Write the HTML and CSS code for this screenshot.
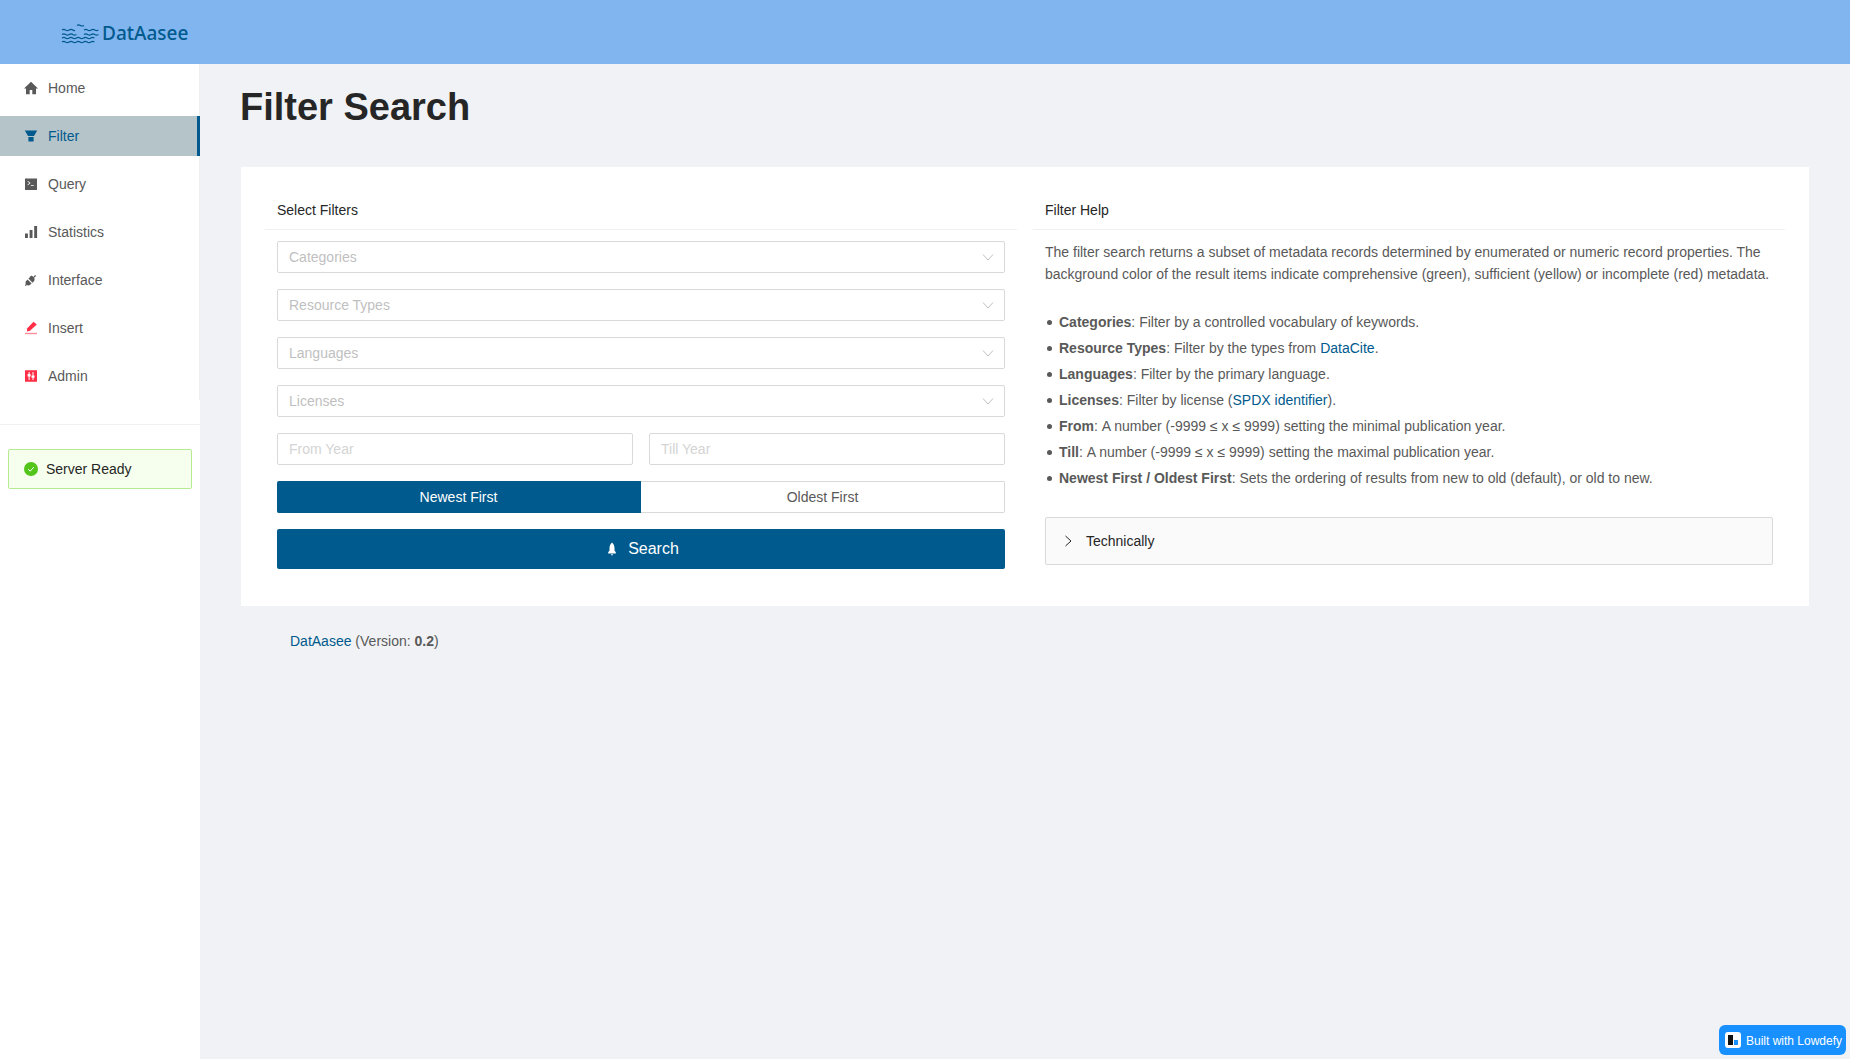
FILE: index.html
```html
<!DOCTYPE html>
<html lang="en">
<head>
    <meta charset="UTF-8">
    <meta name="viewport" content="width=device-width, initial-scale=1.0">
    <title>Filter Search - DatAasee</title>
    <link rel="stylesheet" href="styles.css">
</head>
<body>
    <header class="top-bar">
        <a href="#" class="logo">
            <svg class="logo-waves" width="38" height="20" viewBox="0 0 38 20" fill="none" stroke="#005a8d" stroke-width="1.200">
                <path d="M16 1.500c1.200-.8 2.200-.8 3.500 0s2.300 .6 3.500 0"/>
                <path d="M1 6c1.200-.9 2.400-.9 3.600 0s2.400 .9 3.600 0 2.400-.9 3.600 0 1.500 .7 2.200 .4M23 6c1.200-.9 2.400-.9 3.600 0s2.400 .9 3.600 0 2.400-.9 3.600 0 2.400 .9 3.600 0"/>
                <path d="M1 10.500c1.200-.9 2.400-.9 3.600 0s2.400 .9 3.600 0 2.400-.9 3.600 0 2.400 .9 3.600 0M23 10.500c1.200-.9 2.400-.9 3.600 0s2.400 .9 3.600 0 2.400-.9 3.600 0 2.400 .9 3.600 0"/>
                <path d="M1 14c1.200-.9 2.400-.9 3.600 0s2.400 .9 3.600 0 2.400-.9 3.600 0 2.400 .9 3.600 0 2.400-.9 3.600 0 2.400 .9 3.600 0 2.400-.9 3.600 0 2.400 .9 3.600 0 2.400-.9 3.600 0"/>
                <path d="M1 18c1.200-.9 2.400-.9 3.600 0s2.400 .9 3.600 0 2.400-.9 3.600 0 2.400 .9 3.600 0 2.400-.9 3.600 0 2.400 .9 3.600 0 2.400-.9 3.600 0 2.400 .9 3.600 0 2.400-.9 3.600 0"/>
            </svg>
            <span class="logo-text">DatAasee</span>
        </a>
    </header>

    <div class="page-body">
        <aside class="sidebar">
            <nav class="side-menu">
                <a href="#" class="menu-item">
                    <svg class="menu-icon" viewBox="0 0 14 14"><path d="M7 .8 0 7.400h2V13.300h3.700V9h2.600v4.300H12V7.400h2z"/></svg>
                    Home
                </a>
                <a href="#" class="menu-item active">
                    <svg class="menu-icon" viewBox="0 0 14 14"><path d="M.8 1.500h12.400L10 7H4zM4.400 8h5.200v4.500H4.400z"/></svg>
                    Filter
                </a>
                <a href="#" class="menu-item">
                    <svg class="menu-icon" viewBox="0 0 14 14"><path fill-rule="evenodd" d="M1 1.500h12v11.500H1zM3.400 4.500l2 1.600-2 1.600.5.600 2.700-2.200-2.700-2.200zM6.800 8.200v.8h3v-.8z"/></svg>
                    Query
                </a>
                <a href="#" class="menu-item">
                    <svg class="menu-icon" viewBox="0 0 14 14"><path d="M1 8.500h2.900V13H1zM5.600 5h2.900v8H5.600zM10.200 1h2.900v12h-2.900z"/></svg>
                    Statistics
                </a>
                <a href="#" class="menu-item">
                    <svg class="menu-icon" viewBox="0 0 14 14"><path d="M8 2.800 9.300 4l1.800-2 1 1-2 1.800c.8 1.300.6 2.700-.4 3.700L8.500 9.700 4.400 5.600l1.200-1.200C6.200 3 7 2.600 8 2.800zM3.600 6.500l4 4-1.200 1.100c-1 1-2.400 1.200-3.600.5L1.700 13l-.8-.8 1-1.100c-.7-1.200-.5-2.600.5-3.400z"/></svg>
                    Interface
                </a>
                <a href="#" class="menu-item danger">
                    <svg class="menu-icon" viewBox="0 0 14 14"><path d="M9.500 .8 12.800 3.600 6 9.800 2.800 10.500 3.300 7.300z"/><path d="M1 11.800h12v1.400H1z" opacity=".55"/></svg>
                    Insert
                </a>
                <a href="#" class="menu-item danger">
                    <svg class="menu-icon" viewBox="0 0 14 14"><path fill-rule="evenodd" d="M1 1.200h12v11.600H1zM4.600 3v2H3.600v2.400h1V11h1V7.400h1V5h-1V3zM8.500 3v3.400h-1v2.400h1V11h1V8.800h1V6.400h-1V3z"/></svg>
                    Admin
                </a>
            </nav>
            <div class="side-divider"></div>
            <div class="status-alert">
                <svg class="status-icon" width="14" height="14" viewBox="0 0 14 14">
                    <circle cx="7" cy="7" r="7" fill="#52c41a"/>
                    <path d="M4.200 7.200 6.200 9.200 9.800 5.200" fill="none" stroke="#fff" stroke-width="1"/>
                </svg>
                Server Ready
            </div>
        </aside>

        <main class="content">
            <h1>Filter Search</h1>

            <section class="card">
                <div class="card-col">
                    <div class="col-title">Select Filters</div>
                    <div class="form-stack">
                        <div class="select-box">
                            <span>Categories</span>
                            <svg class="chevron" viewBox="0 0 12 12"><path d="M1 3.500 6 9l5-5.500"/></svg>
                        </div>
                        <div class="select-box">
                            <span>Resource Types</span>
                            <svg class="chevron" viewBox="0 0 12 12"><path d="M1 3.500 6 9l5-5.500"/></svg>
                        </div>
                        <div class="select-box">
                            <span>Languages</span>
                            <svg class="chevron" viewBox="0 0 12 12"><path d="M1 3.500 6 9l5-5.500"/></svg>
                        </div>
                        <div class="select-box">
                            <span>Licenses</span>
                            <svg class="chevron" viewBox="0 0 12 12"><path d="M1 3.500 6 9l5-5.500"/></svg>
                        </div>
                        <div class="year-row">
                            <input type="text" class="year-input" placeholder="From Year">
                            <input type="text" class="year-input" placeholder="Till Year">
                        </div>
                        <div class="sort-toggle">
                            <div class="sort-option selected">Newest First</div>
                            <div class="sort-option">Oldest First</div>
                        </div>
                        <button class="search-button">
                            <svg width="14" height="14" viewBox="0 0 14 14" fill="#fff"><path d="M7 .5C8.700 2 9.500 4 9.500 6v2.500l1.300 1.700v1.300H3.200v-1.300l1.300-1.700V6C4.500 4 5.300 2 7 .5zM5.800 12.200h2.400L7 13.800z"/></svg>
                            Search
                        </button>
                    </div>
                </div>

                <div class="card-col">
                    <div class="col-title">Filter Help</div>
                    <div class="help-body">
                        <p>The filter search returns a subset of metadata records determined by enumerated or numeric record properties. The background color of the result items indicate comprehensive (green), sufficient (yellow) or incomplete (red) metadata.</p>
                        <ul class="help-list">
                            <li><strong>Categories</strong>: Filter by a controlled vocabulary of keywords.</li>
                            <li><strong>Resource Types</strong>: Filter by the types from <a href="#">DataCite</a>.</li>
                            <li><strong>Languages</strong>: Filter by the primary language.</li>
                            <li><strong>Licenses</strong>: Filter by license (<a href="#">SPDX identifier</a>).</li>
                            <li><strong>From</strong>:&nbsp;A number (-9999 ≤ x ≤ 9999) setting the minimal publication year.</li>
                            <li><strong>Till</strong>:&nbsp;A number (-9999 ≤ x ≤ 9999) setting the maximal publication year.</li>
                            <li><strong>Newest First / Oldest First</strong>: Sets the ordering of results from new to old (default), or old to new.</li>
                        </ul>
                        <div class="collapse-box">
                            <svg class="collapse-arrow" viewBox="0 0 12 12"><path d="M3.500 1 9 6l-5.500 5"/></svg>
                            Technically
                        </div>
                    </div>
                </div>
            </section>

            <footer class="page-footer"><a href="#">DatAasee</a> (Version: <strong>0.2</strong>)</footer>
        </main>
    </div>

    <a href="#" class="lowdefy-badge">
        <span class="badge-logo"><span class="badge-dark"></span><span class="badge-blue"></span></span>
        <span class="badge-text">Built with Lowdefy</span>
    </a>
</body>
</html>
```

FILE: styles.css
```css
* {
    box-sizing: border-box;
}

html, body {
    height: 100%;
}

body {
    margin: 0;
    overflow: hidden;
    font-family: "Liberation Sans", Arial, sans-serif;
    font-size: 14px;
    line-height: 22px;
    color: #595959;
    background-color: #f0f2f5;
    display: flex;
    flex-direction: column;
}

a {
    color: #005a8d;
    text-decoration: none;
}

.top-bar {
    height: 64px;
    flex-shrink: 0;
    background-color: #80b5f0;
    padding-left: 61px;
    display: flex;
    align-items: center;
}

.logo {
    display: flex;
    align-items: center;
    gap: 3px;
    margin-top: 3px;
}

.logo-text {
    font-family: "Noto Sans", sans-serif;
    font-size: 19px;
    font-weight: 500;
    line-height: 24px;
    color: #005a8d;
    margin-top: -2px;
}

.page-body {
    flex: 1;
    display: flex;
    min-height: 0;
}

.sidebar {
    width: 200px;
    flex-shrink: 0;
    background-color: #fff;
}

.side-menu {
    display: flex;
    flex-direction: column;
    gap: 8px;
    padding: 4px 0;
    border-right: 1px solid #f0f0f0;
}

.menu-item {
    height: 40px;
    padding-left: 24px;
    display: flex;
    align-items: center;
    gap: 10px;
    color: #595959;
}

.menu-item.active {
    color: #005a8d;
    background-color: #b5c4c9;
    border-right: 3px solid #005a8d;
    margin-right: -1px;
}

.menu-icon {
    width: 14px;
    height: 14px;
    fill: #595959;
}

.menu-item.active .menu-icon {
    fill: #005a8d;
}

.menu-item.danger .menu-icon {
    fill: #ff2d46;
}

.side-divider {
    height: 1px;
    margin: 24px 0;
    background-color: #f0f0f0;
}

.status-alert {
    height: 40px;
    margin: 0 8px;
    padding-left: 15px;
    display: flex;
    align-items: center;
    gap: 8px;
    color: #262626;
    background-color: #f6ffed;
    border: 1px solid #b7eb8f;
    border-radius: 2px;
}

.content {
    flex: 1;
    min-width: 0;
    padding: 0 41px;
}

h1 {
    margin: 20px 0 37px -1px;
    font-size: 38px;
    line-height: 46px;
    font-weight: 700;
    color: #262626;
}

.card {
    height: 439px;
    padding: 32px 24px 0;
    background-color: #fff;
    display: grid;
    grid-template-columns: 752px 752px;
    column-gap: 16px;
}

.col-title {
    padding: 0 12px 8px;
    color: #262626;
    border-bottom: 1px solid #f0f0f0;
}

.form-stack {
    padding: 11px 12px 0;
    display: flex;
    flex-direction: column;
    gap: 16px;
}

.select-box {
    height: 32px;
    padding: 0 10px 0 11px;
    display: flex;
    align-items: center;
    justify-content: space-between;
    color: #bfbfbf;
    border: 1px solid #d9d9d9;
    border-radius: 2px;
}

.chevron {
    width: 12px;
    height: 12px;
    fill: none;
    stroke: #bfbfbf;
    stroke-width: 1;
}

.year-row {
    display: flex;
    gap: 16px;
}

.year-input {
    flex: 1;
    min-width: 0;
    height: 32px;
    padding: 0 11px;
    font-family: inherit;
    font-size: 14px;
    border: 1px solid #d9d9d9;
    border-radius: 2px;
}

.year-input::placeholder {
    color: #d4d4d4;
}

.sort-toggle {
    display: flex;
}

.sort-option {
    flex: 1;
    height: 32px;
    display: flex;
    align-items: center;
    justify-content: center;
    color: #595959;
    border: 1px solid #d9d9d9;
    border-left: none;
    border-radius: 0 2px 2px 0;
}

.sort-option.selected {
    color: #fff;
    background-color: #005a8d;
    border-color: #005a8d;
    border-radius: 2px 0 0 2px;
}

.search-button {
    height: 40px;
    padding-left: 8px;
    display: flex;
    align-items: center;
    justify-content: center;
    gap: 9px;
    font-family: inherit;
    font-size: 16px;
    color: #fff;
    background-color: #005a8d;
    border: none;
    border-radius: 2px;
}

.help-body {
    padding: 11px 12px 0;
}

.help-body p {
    margin: 0 0 24px;
}

.help-list {
    list-style: none;
    margin: 0;
    padding: 0 0 0 14px;
}

.help-list li {
    position: relative;
    height: 26px;
    line-height: 26px;
}

.help-list li::before {
    content: "";
    position: absolute;
    left: -12px;
    top: 11px;
    width: 5px;
    height: 5px;
    border-radius: 50%;
    background-color: #595959;
}

.help-list a {
    color: #005a8d;
}

.collapse-box {
    height: 48px;
    margin-top: 26px;
    padding-left: 16px;
    display: flex;
    align-items: center;
    gap: 12px;
    width: 728px;
    color: #262626;
    background-color: #fafafa;
    border: 1px solid #d9d9d9;
    border-radius: 2px;
}

.collapse-arrow {
    width: 12px;
    height: 12px;
    fill: none;
    stroke: #262626;
    stroke-width: 1;
}

.page-footer {
    padding: 24px 0 0 49px;
}

.lowdefy-badge {
    position: fixed;
    right: 4px;
    bottom: 4px;
    height: 30px;
    padding: 0 4px 0 6px;
    display: flex;
    align-items: center;
    gap: 5px;
    font-size: 12px;
    color: #fff;
    background-color: #1890ff;
    border-radius: 6px;
}

.badge-text {
    margin-top: 1px;
}

.badge-logo {
    position: relative;
    width: 16px;
    height: 16px;
    background-color: #fff;
    border-radius: 3px;
}

.badge-dark {
    position: absolute;
    left: 3px;
    top: 3px;
    width: 5px;
    height: 10px;
    background-color: #111;
}

.badge-blue {
    position: absolute;
    left: 9px;
    top: 8px;
    width: 4px;
    height: 5px;
    background-color: #1890ff;
}
```
